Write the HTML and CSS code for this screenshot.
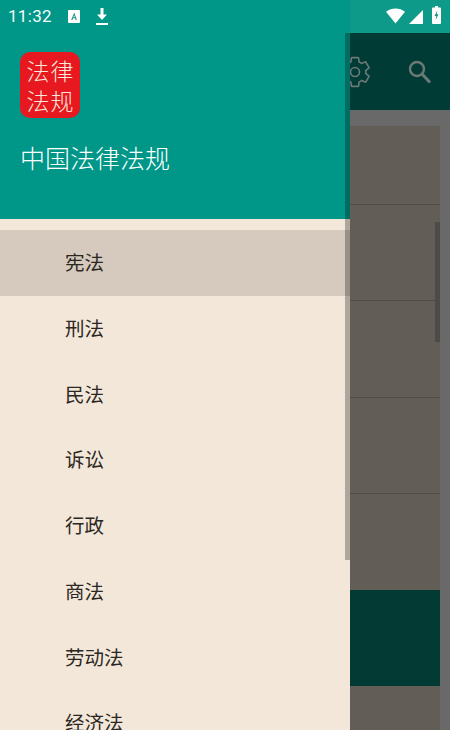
FILE: index.html
```html
<!DOCTYPE html>
<html lang="zh">
<head>
<meta charset="utf-8">
<title>中国法律法规</title>
<link rel="stylesheet" href="styles.css">
</head>
<body>
<div class="screen">
  <div class="app">
    <div class="status-space"></div>
    <div class="toolbar">
      <svg class="gear" viewBox="0 0 24 24"><path d="M19.14 12.94c.04-.3.06-.61.06-.94 0-.32-.02-.64-.07-.94l2.03-1.58c.18-.14.23-.41.12-.61l-1.92-3.32c-.12-.22-.37-.29-.59-.22l-2.39.96c-.5-.38-1.03-.7-1.62-.94l-.36-2.54c-.04-.24-.24-.41-.48-.41h-3.84c-.24 0-.43.17-.47.41l-.36 2.54c-.59.24-1.13.57-1.62.94l-2.39-.96c-.22-.08-.47 0-.59.22L2.74 8.87c-.12.21-.08.47.12.61l2.03 1.58c-.05.3-.09.63-.09.94s.02.64.07.94l-2.03 1.58c-.18.14-.23.41-.12.61l1.92 3.32c.12.22.37.29.59.22l2.39-.96c.5.38 1.03.7 1.62.94l.36 2.54c.05.24.24.41.48.41h3.84c.24 0 .44-.17.47-.41l.36-2.54c.59-.24 1.13-.56 1.62-.94l2.39.96c.22.08.47 0 .59-.22l1.92-3.32c.12-.22.07-.47-.12-.61l-2.01-1.58z" fill="none" stroke="currentColor" stroke-width="1.100"/><circle cx="12" cy="12" r="3" fill="none" stroke="currentColor" stroke-width="1.100"/></svg>
      <svg class="search" viewBox="0 0 28 28"><circle cx="12" cy="11" r="7" fill="none" stroke="currentColor" stroke-width="2.400"/><path d="M17 16l8 8.500" fill="none" stroke="currentColor" stroke-width="3"/></svg>
    </div>
    <div class="list-wrap">
      <div class="list">
        <div class="row row-first"></div>
        <div class="row"></div>
        <div class="row"></div>
        <div class="row"></div>
        <div class="row row-plain"></div>
        <div class="row-dark"></div>
        <div class="scroll-thumb"></div>
      </div>
    </div>
  </div>
  <div class="status">
    <span class="time">11:32</span>
    <svg class="st-a" viewBox="0 0 12 13"><rect width="12" height="13" rx="1" fill="#fff"/><path d="M3.200 10 6 3h.4l2.500 7H7.700l-.5-1.700H5L4.400 10zM5.300 7.300h1.600L6.100 5z" fill="#1a8f80"/></svg>
    <svg class="st-dl" viewBox="0 0 12 17"><path d="M4.500 0h3v6.500h3.500L6 12 1 6.500h3.500z" fill="#fff"/><rect x="0" y="15" width="12" height="2" fill="#fff"/></svg>
    <span class="st-gap"></span>
    <svg class="st-wifi" viewBox="0 0 20 16"><path d="M0 3.500C5.500-1.200 14.500-1.200 20 3.500L10 16z" fill="#fff"/></svg>
    <svg class="st-sig" viewBox="0 0 14 14"><path d="M14 0v14H0z" fill="#fff"/></svg>
    <svg class="st-bat" viewBox="0 0 9 18"><path d="M3 0h3v1.500h2a1 1 0 0 1 1 1V17a1 1 0 0 1-1 1H1a1 1 0 0 1-1-1V2.500a1 1 0 0 1 1-1h2z" fill="#fff"/><path d="M5.300 4.500 2.500 10h1.800l-.6 4L6.500 8.300H4.700z" fill="#1a8f80"/></svg>
  </div>
  <aside class="drawer">
    <header class="drawer-head">
      <div class="logo"><span>法律</span><span>法规</span></div>
      <div class="app-name">中国法律法规</div>
    </header>
    <nav class="menu">
      <div class="item active">宪法</div>
      <div class="item">刑法</div>
      <div class="item">民法</div>
      <div class="item">诉讼</div>
      <div class="item">行政</div>
      <div class="item">商法</div>
      <div class="item">劳动法</div>
      <div class="item">经济法</div>
    </nav>
    <div class="drawer-thumb"></div>
  </aside>
</div>
</body>
</html>
```
FILE: styles.css
```css
* { box-sizing: border-box; }
html, body { margin: 0; padding: 0; }
body {
  width: 450px;
  height: 730px;
  overflow: hidden;
  font-family: "Noto Sans CJK SC", Roboto, sans-serif;
}
.screen {
  position: relative;
  width: 450px;
  height: 730px;
  overflow: hidden;
  background: #686868;
}
.app {
  display: flex;
  flex-direction: column;
  height: 100%;
}
.status-space {
  height: 33px;
  flex: none;
  background: #0e9a88;
}
.toolbar {
  height: 77px;
  flex: none;
  background: #013b35;
  color: #6b7a77;
  display: flex;
  justify-content: flex-end;
  align-items: center;
  gap: 32px;
  padding: 0 17px 0 0;
}
.gear { width: 36px; height: 36px; display: block; }
.search { width: 28px; height: 28px; display: block; }
.list-wrap {
  flex: 1;
  background: #696969;
  padding: 16px 10px 0 0;
}
.list {
  position: relative;
  height: 100%;
  background: #635d58;
}
.row {
  height: 96.500px;
  border-bottom: 1px solid #514c48;
}
.row-first { height: 78.500px; }
.row-plain { height: 96px; border-bottom: 0; }
.row-dark {
  height: 96px;
  background: #033a34;
}
.scroll-thumb {
  position: absolute;
  top: 96px;
  right: 0;
  width: 5px;
  height: 120px;
  background: #4e4a47;
}
.status {
  position: absolute;
  top: 0;
  left: 0;
  right: 0;
  height: 33px;
  z-index: 3;
  display: flex;
  align-items: center;
  padding: 0 9px 0 8px;
  color: #f4fbfa;
}
.time { font: 17px/33px Roboto, sans-serif; letter-spacing: .3px; }
.st-a { width: 12px; height: 13px; margin-left: 16px; margin-top: -1px; }
.st-dl { width: 12px; height: 17px; margin-left: 16px; margin-top: -1px; }
.st-gap { flex: 1; }
.st-wifi { width: 19px; height: 16px; margin-top: -1px; }
.st-sig { width: 14px; height: 14px; margin-left: 4px; margin-top: 1px; }
.st-bat { width: 9px; height: 18px; margin-left: 9px; margin-top: -3px; }
.drawer {
  position: absolute;
  top: 0;
  left: 0;
  bottom: 0;
  width: 350px;
  z-index: 2;
  background: #f3e7da;
  overflow: hidden;
}
.drawer-head {
  height: 219px;
  background: #009688;
  padding: 52px 0 0 20px;
  color: #fff;
}
.logo {
  width: 60px;
  height: 66px;
  border-radius: 10px;
  background: #e7181f;
  display: flex;
  flex-direction: column;
  align-items: center;
  justify-content: center;
  font: 300 23px/30px "Noto Sans CJK SC", sans-serif;
  letter-spacing: 1px;
  color: #fbe6dc;
}
.logo span { display: block; height: 30px; margin-right: -1px; }
.app-name {
  margin-top: 19px;
  font-size: 25px;
  line-height: 40px;
  font-weight: 300;
  white-space: nowrap;
}
.menu { padding-top: 11px; }
.item {
  height: 65.750px;
  padding-left: 65px;
  font-size: 19.500px;
  line-height: 64px;
  color: #2b2723;
}
.active { background: #d5cabd; }
.drawer-thumb {
  position: absolute;
  top: 33px;
  right: 0;
  width: 5px;
  height: 527px;
  background: rgba(0,0,0,.28);
}
```
